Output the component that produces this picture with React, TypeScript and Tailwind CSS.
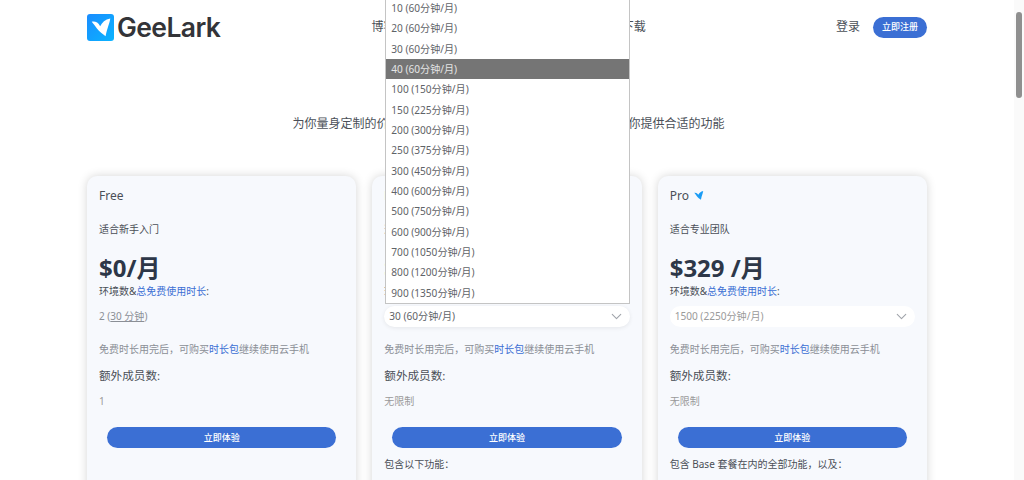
import { ChevronDown } from "lucide-react";

const options = [
  "10 (60分钟/月)",
  "20 (60分钟/月)",
  "30 (60分钟/月)",
  "40 (60分钟/月)",
  "100 (150分钟/月)",
  "150 (225分钟/月)",
  "200 (300分钟/月)",
  "250 (375分钟/月)",
  "300 (450分钟/月)",
  "400 (600分钟/月)",
  "500 (750分钟/月)",
  "600 (900分钟/月)",
  "700 (1050分钟/月)",
  "800 (1200分钟/月)",
  "900 (1350分钟/月)",
];

const Bird = ({ className }: { className?: string }) => (
  <svg viewBox="0 0 80 80" className={className}>
    <path d="M14 23 C24 21 33 25 39 36 C44 25 54 16 69 13 C67 28 60 40 55 66 C47 60 36 52 30 44 C25 37 20 30 14 23 Z" fill="currentColor" />
  </svg>
);

const Logo = () => (
  <div className="flex items-center">
    <div className="w-[27px] h-[27px] rounded-[3px] bg-gradient-to-br from-[#1a8cff] to-[#0bb4ff] text-white flex items-center justify-center">
      <Bird className="w-[27px] h-[27px]" />
    </div>
    <span className="ml-[3px] text-[26.5px] leading-[27px] font-semibold text-[#333438] font-['Inter',sans-serif] tracking-[-0.6px]">
      GeeLark
    </span>
  </div>
);

const Chevron = () => <ChevronDown size={17} strokeWidth={1.5} className="text-[#a0a4aa]" />;

const Link = ({ children }: { children: string }) => <span className="text-[#3b6fd4]">{children}</span>;

interface PlanProps {
  name: string;
  proIcon?: boolean;
  desc: string;
  price: string;
  value: React.ReactNode;
  memberLimit: string;
  features?: string;
}

const Plan = ({ name, proIcon, desc, price, value, memberLimit, features }: PlanProps) => (
  <div className="flex-1 h-[340px] rounded-[10px] bg-[#f7f9fd] px-[12px] pt-[12px] shadow-[0_0_10px_rgba(0,0,0,0.17)]">
    <div className="flex items-start text-[12px] leading-[16px] text-[#4a4f57]">
      {name}
      {proIcon && <Bird className="w-[13px] h-[13px] ml-[3px] mt-[1px] text-[#1a9cf5]" />}
    </div>
    <div className="mt-[17px] text-[10px] leading-[16px] text-[#4a4f57]">{desc}</div>
    <div className="mt-[15px] text-[24px] leading-[32px] font-bold text-[#2d3748]">{price}</div>
    <div className="text-[10px] leading-[15px] text-[#4a4f57]">
      环境数&<Link>总免费使用时长</Link>:
    </div>
    <div className="mt-[7px] h-[21px]">{value}</div>
    <div className="mt-[14px] text-[10px] leading-[16px] text-[#8b8f96]">
      免费时长用完后，可购买<Link>时长包</Link>继续使用云手机
    </div>
    <div className="mt-[10px] text-[11.6px] leading-[18px] text-[#4a4f57]">额外成员数:</div>
    <div className="mt-[8px] text-[10px] leading-[16px] text-[#9a9a9a]">{memberLimit}</div>
    <div className="mt-[18px] mx-[8px] h-[21px] rounded-full bg-[#3b6fd4] flex items-center justify-center text-[9px] font-medium text-white">
      立即体验
    </div>
    {features && <div className="mt-[8px] text-[10px] leading-[16px] text-[#4a4f57]">{features}</div>}
  </div>
);

export default function App() {
  return (
    <div className="flex h-[480px] overflow-hidden bg-white font-['Noto_Sans','Noto_Sans_CJK_SC',sans-serif]">
      <main className="flex-1 min-w-0">
        <div className="w-[840px] mx-auto">
          <header className="h-[54px] flex items-center justify-between">
            <Logo />
            <nav className="flex gap-[38.5px] mr-[39px] text-[12px] text-[#4a4f57]">
              <span>博客</span>
              <span>定价</span>
              <span>帮助</span>
              <span>功能</span>
              <span>下载</span>
            </nav>
            <div className="flex items-center gap-[13px]">
              <span className="text-[12px] text-[#4a4f57]">登录</span>
              <div className="w-[54px] h-[21px] rounded-full bg-[#3b6fd4] flex items-center justify-center text-[9px] font-medium text-white">
                立即注册
              </div>
            </div>
          </header>

          <h1 className="mt-[14px] text-center text-2xl leading-[32px] font-bold text-[#2d3748]">定价</h1>
          <p className="mt-[15px] pl-[3px] text-center text-[12px] leading-[18px] text-[#4a4f57]">
            为你量身定制的价格方案，无论是个人还是小团队，我们都能为你提供合适的功能
          </p>

          <div className="mt-[43px] flex gap-[16px]">
            <Plan
              name="Free"
              desc="适合新手入门"
              price="$0/月"
              memberLimit="1"
              value={
                <div className="text-[10px] leading-[21px] text-[#8b8f96]">
                  2 (<span className="underline">30 分钟</span>)
                </div>
              }
            />
            <Plan
              name="Base"
              desc="适合小型团队"
              price="$29 /月"
              memberLimit="无限制"
              features="包含以下功能："
              value={
                <div className="relative h-[21px]">
                  {/* Open select list */}
                  <ul className="absolute bottom-[23px] left-[1px] w-[245px] border-x border-b border-[#c4c4c4] bg-white text-[10.1px] text-[#5f6368]">
                    {options.map((o) => (
                      <li
                        key={o}
                        className={
                          o.startsWith("40 ")
                            ? "h-[20.35px] pl-[5px] leading-[20px] bg-[#757575] text-[#e5e5e5]"
                            : "h-[20.35px] pl-[5px] leading-[20px]"
                        }
                      >
                        {o}
                      </li>
                    ))}
                  </ul>
                  <div className="h-[21px] rounded-full bg-white pl-[5px] pr-[5px] flex items-center justify-between text-[10.1px] text-[#5f6368] shadow-[0_1px_4px_rgba(0,0,0,0.08)]">
                    <span>30 (60分钟/月)</span>
                    <Chevron />
                  </div>
                </div>
              }
            />
            <Plan
              name="Pro"
              proIcon
              desc="适合专业团队"
              price="$329 /月"
              memberLimit="无限制"
              features="包含 Base 套餐在内的全部功能，以及："
              value={
                <div className="h-[21px] rounded-full bg-white pl-[5px] pr-[5px] flex items-center justify-between text-[10.1px] text-[#9a9a9a]">
                  <span>1500 (2250分钟/月)</span>
                  <Chevron />
                </div>
              }
            />
          </div>
        </div>
      </main>

      {/* Scrollbar */}
      <div className="w-[10px] shrink-0 bg-[#fafafa] pt-[12px] pl-[2px]">
        <div className="w-[6px] h-[86px] rounded-full bg-[#8f8f8f]" />
      </div>
    </div>
  );
}
